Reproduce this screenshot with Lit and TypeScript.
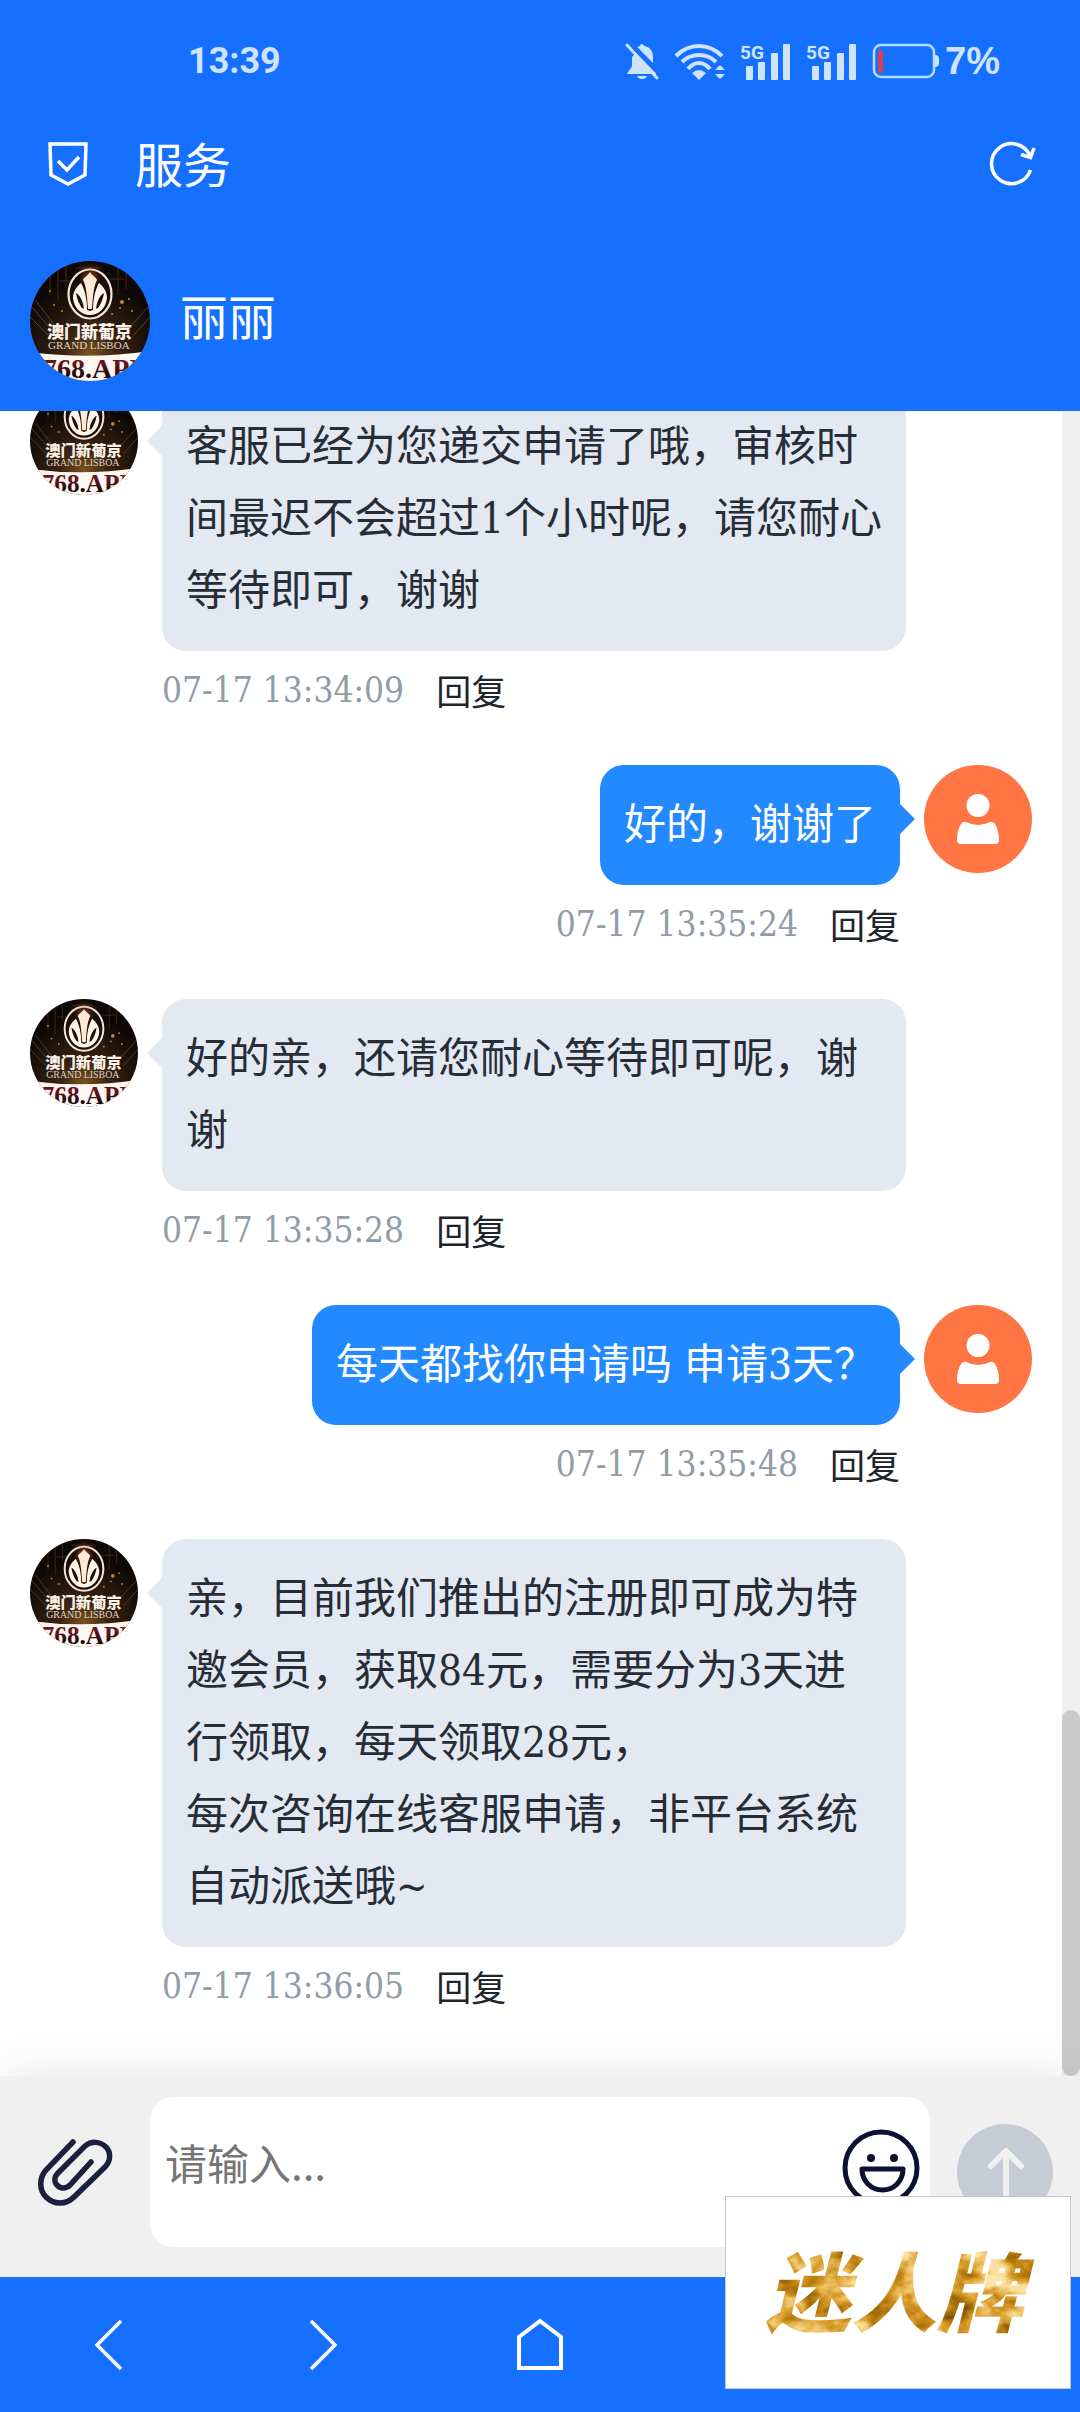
import { LitElement, html, css } from "lit";
import { customElement, property, state } from "lit/decorators.js";

interface Message {
  from: "agent" | "user";
  text: string;
  time: string;
}

const MESSAGES: Message[] = [
  {
    from: "agent",
    text: "客服已经为您递交申请了哦，审核时间最迟不会超过1个小时呢，请您耐心等待即可，谢谢",
    time: "07-17 13:34:09",
  },
  { from: "user", text: "好的，谢谢了", time: "07-17 13:35:24" },
  { from: "agent", text: "好的亲，还请您耐心等待即可呢，谢谢", time: "07-17 13:35:28" },
  { from: "user", text: "每天都找你申请吗 申请3天？", time: "07-17 13:35:48" },
  {
    from: "agent",
    text: "亲，目前我们推出的注册即可成为特邀会员，获取84元，需要分为3天进行领取，每天领取28元，\n每次咨询在线客服申请，非平台系统自动派送哦~",
    time: "07-17 13:36:05",
  },
];

@customElement("agent-avatar")
class AgentAvatar extends LitElement {
  static styles = css`
    :host {
      display: block;
      flex: none;
      border-radius: 50%;
      overflow: hidden;
    }
    .art {
      display: block;
      width: 100%;
      height: 100%;
    }
    .name {
      font: 900 17px "Noto Sans CJK SC", sans-serif;
      fill: #fbf3ea;
    }
    .latin {
      font: 11px "Liberation Serif", serif;
      fill: #e0d2c2;
    }
    .site {
      font: bold 28px "Liberation Serif", serif;
      fill: url(#ink);
    }
  `;

  render() {
    return html`
      <svg class="art" viewBox="0 0 120 120" aria-hidden="true">
        <defs>
          <radialGradient id="night" cx="50%" cy="78%" r="62%">
            <stop offset="0" stop-color="#7a5420" />
            <stop offset="0.35" stop-color="#3a2412" />
            <stop offset="1" stop-color="#0d0806" />
          </radialGradient>
          <radialGradient id="flare">
            <stop offset="0" stop-color="#ffb27a" />
            <stop offset="0.4" stop-color="#b5562a" stop-opacity="0.6" />
            <stop offset="1" stop-color="#5a2814" stop-opacity="0" />
          </radialGradient>
          <linearGradient id="ink" x1="0" y1="0" x2="0" y2="1">
            <stop offset="0.3" stop-color="#6a1420" />
            <stop offset="0.8" stop-color="#14080a" />
          </linearGradient>
        </defs>
        <rect width="120" height="120" fill="url(#night)" />
        <g stroke="#5b3422" stroke-width="1" opacity="0.7">
          <path d="M20 10V34M28 4V40M36 2V24M88 4V34M96 10V28M46 7H70M30 20H40M80 18H94" />
        </g>
        <g stroke="#8a7258" stroke-width="1" opacity="0.5">
          <path d="M2 46L24 72M0 56L18 74M118 46L100 66M120 56L104 74M6 40L26 66" />
        </g>
        <ellipse cx="60" cy="17" rx="17" ry="16" fill="url(#flare)" />
        <g fill="#c08a2e">
          <circle cx="92" cy="41" r="2" />
          <circle cx="99" cy="38" r="1" />
          <circle cx="90" cy="47" r="1" />
          <circle cx="102" cy="50" r="1" />
          <circle cx="24" cy="44" r="1" />
          <circle cx="32" cy="50" r="1" />
          <circle cx="20" cy="30" r="1" />
          <circle cx="82" cy="53" r="1" />
        </g>
        <ellipse cx="60" cy="33" rx="21.500" ry="24.500" fill="#1a0e09" stroke="#f3e6d8" stroke-width="2.200" />
        <ellipse cx="60" cy="17" rx="11" ry="10" fill="url(#flare)" />
        <path d="M60 11C62 15 66 16 67 19C64 24 63 34 62 48H58C57 34 56 24 53 19C54 16 58 15 60 11Z" fill="#ffe9d6" />
        <path
          d="M51 22C55 29 57 38 57 49L54 48C53 40 50 34 46 32C47 38 49 43 52 47L60 50L68 47C71 43 73 38 74 32C70 34 67 40 66 48L63 49C63 38 65 29 69 22C74 26 77 31 77 37C76 47 69 54 60 54C51 54 44 47 43 37C43 31 46 26 51 22Z"
          fill="#fff4e6"
        />
        <text class="name" x="17" y="77">澳门新葡京</text>
        <text class="latin" x="18" y="88">GRAND LISBOA</text>
        <path d="M0 91Q60 99 120 90V120H0Z" fill="#fdf6f1" />
        <text class="site" x="13" y="117">768.API</text>
      </svg>
    `;
  }
}

@customElement("user-avatar")
class UserAvatar extends LitElement {
  static styles = css`
    :host {
      display: block;
      flex: none;
      border-radius: 50%;
      overflow: hidden;
      background: #ff7543;
    }
    .art {
      display: block;
      width: 100%;
      height: 100%;
    }
  `;

  render() {
    return html`
      <svg class="art" viewBox="0 0 108 108" fill="#fff" aria-hidden="true">
        <circle cx="54" cy="40.500" r="11.500" />
        <path
          d="M42 57Q54 63 66 57Q69 56 71 59C74 64 75 69 75 75Q75 79 71 79H37Q33 79 33 75C33 69 34 64 37 59Q39 56 42 57Z"
        />
      </svg>
    `;
  }
}

@customElement("chat-message")
class ChatMessage extends LitElement {
  @property({ attribute: false }) message!: Message;

  static styles = css`
    :host {
      display: block;
    }
    .row {
      display: flex;
      align-items: flex-start;
      gap: 24px;
      padding: 0 30px;
    }
    .row.user {
      flex-direction: row-reverse;
    }
    .avatar {
      width: 108px;
      height: 108px;
    }
    .body {
      display: flex;
      flex: 1;
      flex-direction: column;
      align-items: flex-start;
      min-width: 0;
    }
    .user .body {
      align-items: flex-end;
    }
    .bubble {
      position: relative;
      box-sizing: border-box;
      max-width: calc(100% - 126px);
      margin: 0;
      padding: 24px 20px 24px 24px;
      border-radius: 24px;
      background: #e2e9f2;
      color: #272d36;
      font-size: 42px;
      line-height: 72px;
      white-space: pre-line;
    }
    .user .bubble {
      padding: 24px;
      background: #2389ff;
      color: #fff;
    }
    .bubble::before {
      content: "";
      position: absolute;
      top: 39px;
      right: 100%;
      border: 15px solid transparent;
      border-left-width: 0;
      border-right-color: #e2e9f2;
    }
    .user .bubble::before {
      right: auto;
      left: 100%;
      border-left: 15px solid #2389ff;
      border-right: 0;
    }
    .meta {
      display: flex;
      align-items: center;
      gap: 32px;
      height: 54px;
      margin-top: 12px;
    }
    .time {
      color: #929ca6;
      font-size: 35px;
      line-height: 54px;
    }
    .reply {
      padding: 0;
      border: 0;
      background: none;
      color: #20242b;
      font: 35px/54px "Noto Sans CJK SC", sans-serif;
    }
  `;

  render() {
    const { from, text, time } = this.message;
    return html`
      <article class="row ${from}">
        ${from === "agent"
          ? html`<agent-avatar class="avatar"></agent-avatar>`
          : html`<user-avatar class="avatar"></user-avatar>`}
        <div class="body">
          <p class="bubble">${text}</p>
          <div class="meta">
            <time class="time">${time}</time>
            <button class="reply" type="button">回复</button>
          </div>
        </div>
      </article>
    `;
  }
}

const signalIcon = html`
  <svg viewBox="0 0 51 40" width="51" height="40" fill="#cfe3ff" aria-hidden="true">
    <text class="network" x="0" y="18">5G</text>
    <rect x="6" y="25" width="7" height="14" rx="1" />
    <rect x="18" y="21" width="7" height="18" rx="1" />
    <rect x="31" y="12" width="7" height="27" rx="1" />
    <rect x="43" y="3" width="7" height="36" rx="1" />
  </svg>
`;

@customElement("app-root")
class AppRoot extends LitElement {
  @state() private draft = "";

  static styles = css`
    :host {
      display: flex;
      flex-direction: column;
      position: relative;
      height: 100vh;
      overflow: hidden;
      background: #fff;
      font-family: "DejaVu Serif Condensed", "Liberation Serif", "Noto Sans CJK SC", serif;
    }
    svg {
      display: block;
    }
    button {
      display: grid;
      place-items: center;
      margin: 0;
      padding: 0;
      border: 0;
      background: none;
    }
    .top {
      flex: none;
      background: #1570ff;
      color: #fff;
      font-family: "Noto Sans CJK SC", sans-serif;
    }
    .status {
      display: flex;
      align-items: center;
      gap: 15px;
      height: 122px;
      padding: 0 80px 0 188px;
      color: #cfe3ff;
    }
    .clock {
      margin-right: auto;
      font: bold 36px/48px Roboto, sans-serif;
    }
    .network {
      font: bold 19px Roboto, sans-serif;
    }
    .power {
      display: flex;
      align-items: center;
      gap: 5px;
      font: bold 38px/48px "Liberation Sans", sans-serif;
    }
    .title-bar {
      display: flex;
      align-items: center;
      gap: 43px;
      height: 84px;
      padding: 0 44px;
    }
    .title,
    .agent-name {
      margin: 0;
      font-size: 48px;
      font-weight: 400;
      line-height: 72px;
    }
    .title {
      flex: 1;
      padding-bottom: 4px;
    }
    .agent {
      display: flex;
      align-items: center;
      gap: 30px;
      padding: 55px 30px 30px;
    }
    .agent-avatar {
      width: 120px;
      height: 120px;
    }
    .agent-name {
      padding-bottom: 14px;
    }
    .chat {
      display: flex;
      flex: 1;
      min-height: 0;
    }
    .messages {
      display: flex;
      flex: 1;
      flex-direction: column;
      justify-content: flex-end;
      gap: 48px;
      overflow: hidden;
      padding-bottom: 63px;
    }
    .track {
      display: flex;
      flex-direction: column;
      justify-content: flex-end;
      width: 18px;
      background: #f0f0f0;
    }
    .thumb {
      height: 22%;
      border-radius: 9px;
      background: #cacaca;
    }
    .composer {
      position: relative;
      display: flex;
      flex: none;
      align-items: center;
      padding: 21px 0 30px;
      background: #f0f0f0;
      box-shadow: 0 0 45px rgba(0, 0, 0, 0.1);
    }
    .side {
      flex: none;
      width: 150px;
      height: 96px;
    }
    .field {
      display: flex;
      flex: 1;
      align-items: flex-start;
      box-sizing: border-box;
      height: 150px;
      padding: 31px 9px 0 15px;
      border-radius: 24px;
      background: #fff;
    }
    .input {
      flex: 1;
      min-width: 0;
      margin: 0;
      padding: 0;
      border: 0;
      outline: 0;
      overflow: hidden;
      resize: none;
      background: none;
      color: #272d36;
      font: 42px/68px "Noto Sans CJK SC", sans-serif;
    }
    .input::placeholder {
      color: #757575;
    }
    .nav {
      position: relative;
      display: grid;
      flex: none;
      grid-template-columns: repeat(5, 1fr);
      height: 135px;
      background: #1570ff;
    }
    .promo {
      position: absolute;
      right: 9px;
      bottom: 23px;
      display: grid;
      place-items: center;
      box-sizing: border-box;
      width: 346px;
      height: 193px;
      border: 1px solid #c4c8d0;
      background: #fff;
    }
    .promo-text {
      font: italic 900 86px "Noto Sans CJK SC", sans-serif;
    }
  `;

  render() {
    return html`
      <header class="top">
        <div class="status">
          <span class="clock">13:39</span>
          <svg viewBox="0 0 34 40" width="34" height="40" aria-hidden="true">
            <path
              d="M17 3C18 3 19 4 19 5C25 6 28 10 28 16V24C28 27 32 30 33 33H2C3 30 7 27 7 24V16C7 10 10 6 15 5C15 4 16 3 17 3Z"
              fill="#cfe3ff"
            />
            <path d="M12 35H22Q21 38 17 38T12 35Z" fill="#cfe3ff" />
            <path d="M3 0L36 34" stroke="#1570ff" stroke-width="5" />
            <path d="M-4 -1L10 13" stroke="#1570ff" stroke-width="12" />
            <path d="M2 4L32 37" stroke="#cfe3ff" stroke-width="3" stroke-linecap="round" />
          </svg>
          <svg viewBox="0 0 51 40" width="51" height="40" fill="none" stroke="#cfe3ff" stroke-width="4" aria-hidden="true">
            <path d="M2 15Q12 5 25 5T48 15" />
            <path d="M8 21Q15 14 25 14T42 21" />
            <path d="M14 28Q19 22 25 22T36 28" />
            <path d="M18 32Q25 26 32 32L25 39Z" fill="#cfe3ff" stroke="none" />
            <path d="M41 29L46 24L51 29ZM41 33H51L46 38Z" fill="#cfe3ff" stroke="none" />
          </svg>
          ${signalIcon} ${signalIcon}
          <span class="power">
            <svg viewBox="0 0 68 36" width="68" height="36" aria-hidden="true">
              <rect x="2" y="2" width="60" height="32" rx="7" fill="none" stroke="#b5dcff" stroke-width="2.500" />
              <path d="M63 12Q67 12 67 16V20Q67 24 63 24Z" fill="#cfe3ff" />
              <rect x="6" y="7" width="5" height="23" rx="2" fill="#d4434f" />
            </svg>
            <span>7%</span>
          </span>
        </div>
        <div class="title-bar">
          <svg viewBox="0 0 48 48" width="48" height="48" fill="none" stroke="#fff" stroke-width="3.500" aria-hidden="true">
            <path d="M6 4H42L41 35L24 44L7 35Z" />
            <path d="M14 21L23 30L35 17" />
          </svg>
          <h1 class="title">服务</h1>
          <button type="button" aria-label="刷新">
            <svg viewBox="0 0 48 48" width="48" height="48" fill="none" stroke="#fff" stroke-width="3.500" aria-hidden="true">
              <path d="M42.500 30A20 20 0 1 1 42 16" />
              <path d="M33 14.500L42.500 17.500L46 8" />
            </svg>
          </button>
        </div>
        <div class="agent">
          <agent-avatar class="agent-avatar"></agent-avatar>
          <h2 class="agent-name">丽丽</h2>
        </div>
      </header>

      <main class="chat">
        <div class="messages">
          ${MESSAGES.map((m) => html`<chat-message .message=${m}></chat-message>`)}
        </div>
        <div class="track"><div class="thumb"></div></div>
      </main>

      <form class="composer" @submit=${(e: Event) => e.preventDefault()}>
        <button class="side" type="button" aria-label="附件">
          <svg viewBox="0 0 80 80" width="80" height="80" fill="none" stroke="#1c1f3d" stroke-width="5.500" stroke-linecap="round" aria-hidden="true">
            <path
              d="M38 10L11 38C4 46 4 58 11 65C19 73 31 73 39 65L70 35C76 29 76 20 71 15C65 9 56 9 50 14L23 41C19 45 19 50 22 53C25 57 31 57 35 53L56 30"
            />
          </svg>
        </button>
        <div class="field">
          <textarea
            class="input"
            rows="1"
            placeholder="请输入..."
            aria-label="请输入"
            .value=${this.draft}
            @input=${(e: Event) => (this.draft = (e.target as HTMLTextAreaElement).value)}
          ></textarea>
          <button type="button" aria-label="表情">
            <svg viewBox="0 0 80 80" width="80" height="80" fill="none" stroke="#0d1130" stroke-width="5" stroke-linejoin="round" aria-hidden="true">
              <circle cx="40" cy="40" r="36" />
              <circle cx="30" cy="30" r="4" fill="#0d1130" stroke="none" />
              <circle cx="53" cy="30" r="4" fill="#0d1130" stroke="none" />
              <path d="M21 41H62C62 53 53 62 41.500 62S21 53 21 41Z" />
            </svg>
          </button>
        </div>
        <button class="side" type="submit" aria-label="发送">
          <svg viewBox="0 0 96 96" width="96" height="96" fill="none" stroke="#f0f0f0" stroke-width="6" stroke-linecap="round" stroke-linejoin="round" aria-hidden="true">
            <circle cx="48" cy="48" r="48" fill="#c5ccd6" stroke="none" />
            <path d="M49 70V27M34 42L49 27L64 42" />
          </svg>
        </button>
      </form>

      <nav class="nav">
        <button type="button" aria-label="后退">
          <svg viewBox="0 0 56 56" width="56" height="56" fill="none" stroke="#fff" stroke-width="3.500" aria-hidden="true">
            <path d="M41 4L17 28L41 52" />
          </svg>
        </button>
        <button type="button" aria-label="前进">
          <svg viewBox="0 0 56 56" width="56" height="56" fill="none" stroke="#fff" stroke-width="3.500" aria-hidden="true">
            <path d="M15 4L39 28L15 52" />
          </svg>
        </button>
        <button type="button" aria-label="主页">
          <svg viewBox="0 0 56 56" width="56" height="56" fill="none" stroke="#fff" stroke-width="4" aria-hidden="true">
            <path d="M7 51V20L28 4L49 20V51Z" />
          </svg>
        </button>
      </nav>

      <a class="promo" href="#">
        <svg viewBox="0 0 344 191" width="344" height="191" role="img" aria-label="迷人牌">
          <defs>
            <filter id="gold" x="0" y="0" width="1" height="1" color-interpolation-filters="sRGB">
              <feTurbulence type="fractalNoise" baseFrequency="0.028 0.04" numOctaves="4" seed="7" />
              <feColorMatrix values="1 0 0 0 0  1 0 0 0 0  1 0 0 0 0  0 0 0 0 1" />
              <feComponentTransfer>
                <feFuncR type="table" tableValues="0.5 0.5 0.5 0.62 0.76 0.85 0.93 0.98 1 1 1" />
                <feFuncG type="table" tableValues="0.3 0.3 0.32 0.42 0.52 0.62 0.76 0.88 0.9 0.9 0.9" />
                <feFuncB type="table" tableValues="0.03 0.03 0.03 0.05 0.08 0.18 0.4 0.6 0.7 0.7 0.7" />
              </feComponentTransfer>
              <feComposite in2="SourceAlpha" operator="in" />
            </filter>
          </defs>
          <text class="promo-text" x="168" y="128" text-anchor="middle" filter="url(#gold)">迷人牌</text>
        </svg>
      </a>
    `;
  }
}
